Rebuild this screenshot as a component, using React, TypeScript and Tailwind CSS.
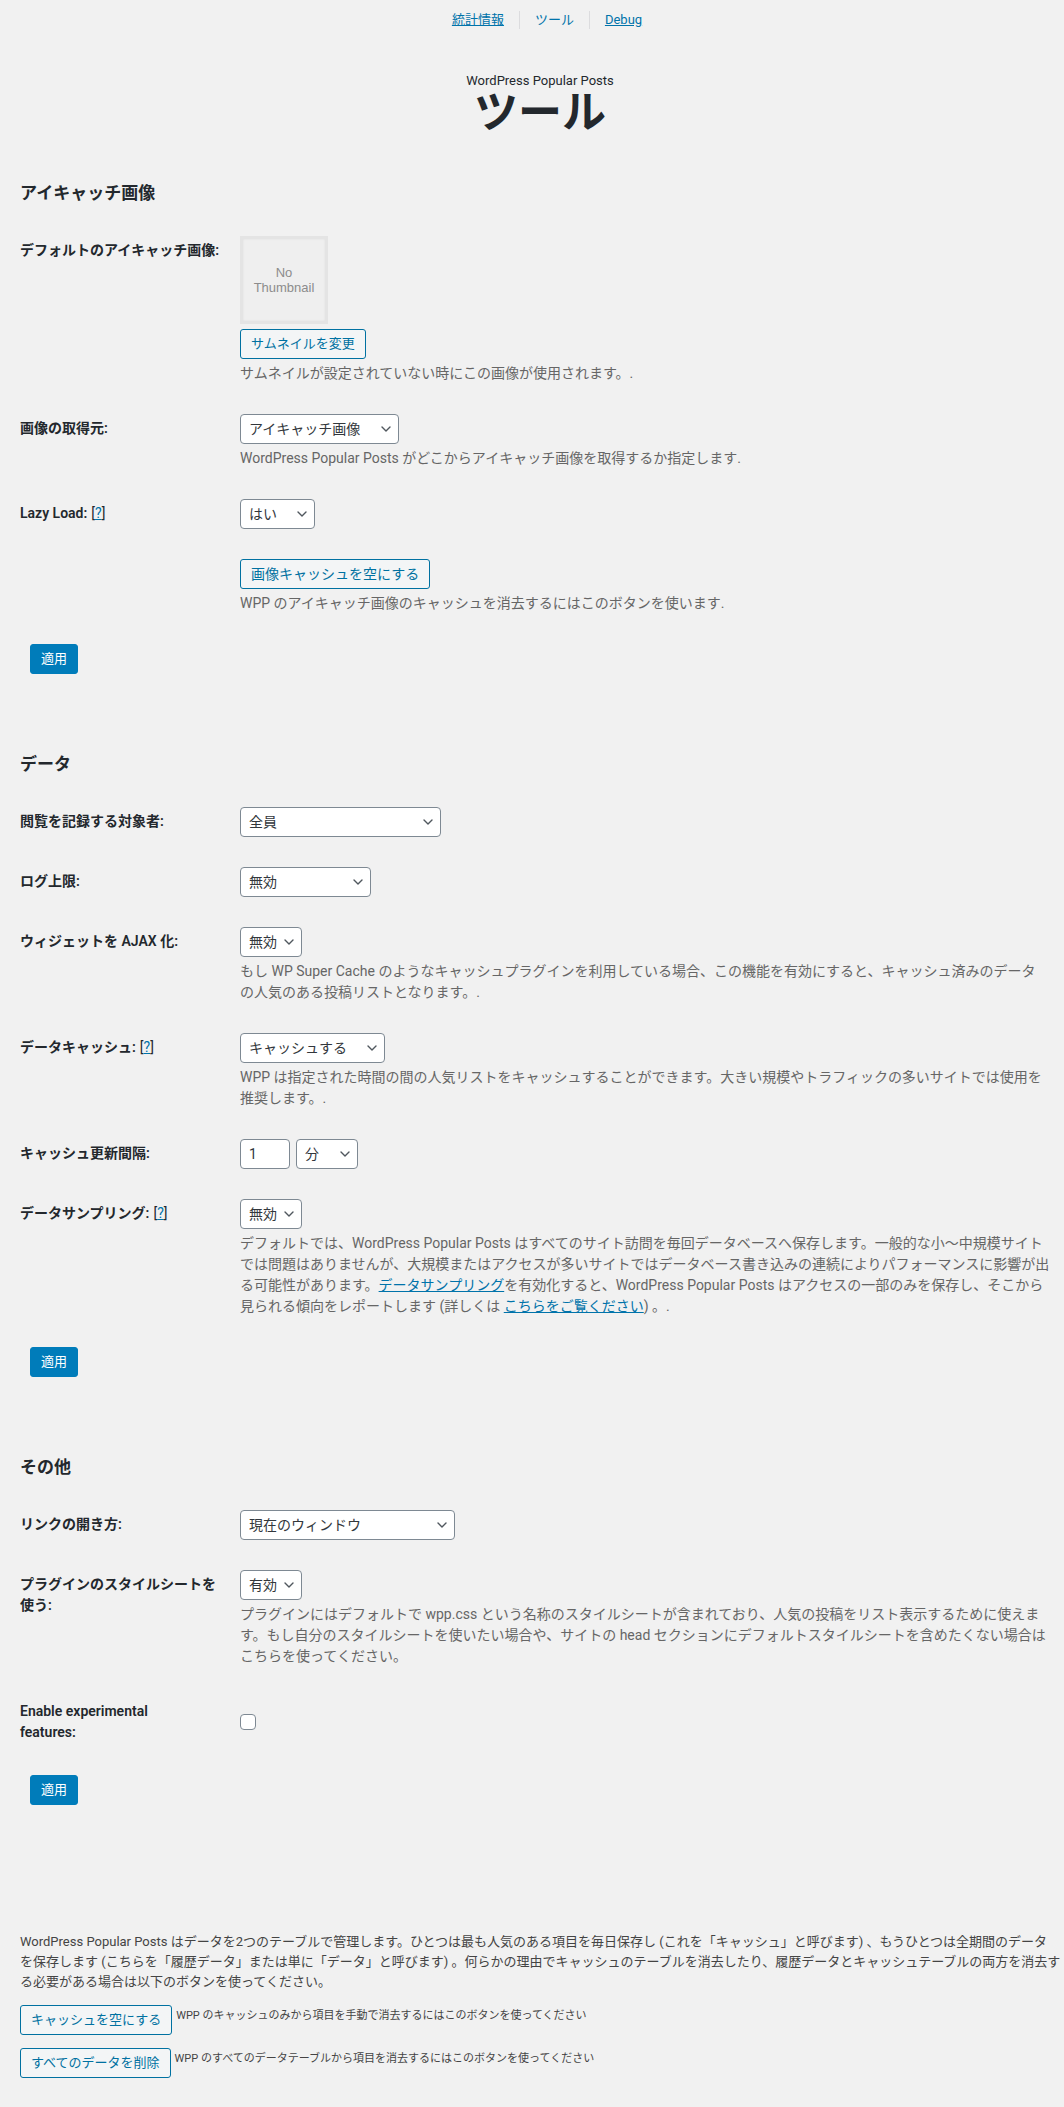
import React from 'react';

type Children = { children?: React.ReactNode };

const Chevron = () => (
    <svg
        className="pointer-events-none absolute right-[8px] top-1/2 -translate-y-1/2"
        width="10"
        height="6"
        viewBox="0 0 10 6"
        fill="none"
    >
        <path d="M1 1l4 4 4-4" stroke="#50575e" strokeWidth="1.4" strokeLinecap="round" strokeLinejoin="round" />
    </svg>
);

function Select({ value, options, className }: { value: string; options?: string[]; className: string }) {
    const opts = options ?? [value];
    return (
        <div className={`relative inline-block align-top ${className}`}>
            <select
                defaultValue={value}
                className="h-[30px] w-full appearance-none rounded-[4px] border border-[#7e8993] bg-white pl-[8px] pr-[24px] text-[14px] leading-[28px] text-[#32373c] outline-none"
            >
                {opts.map((o) => (
                    <option key={o}>{o}</option>
                ))}
            </select>
            <Chevron />
        </div>
    );
}

const Help = () => (
    <span className="ml-[4px] text-[14px] font-normal text-[#23282d]">
        [<a href="#" className="text-[#0073aa] underline">?</a>]
    </span>
);

function Row({ label, children }: { label?: React.ReactNode } & Children) {
    return (
        <div className="flex py-[15px]">
            <div className="w-[220px] shrink-0 pr-[20px] pt-[4px] text-[14px] font-semibold leading-[21px] text-[#23282d]">
                {label}
            </div>
            <div className="min-w-0 flex-1">{children}</div>
        </div>
    );
}

const Desc = ({ children }: Children) => (
    <p className="mt-[4px] text-[14px] leading-[21px] whitespace-nowrap text-[#666]">{children}</p>
);

const SecondaryButton = ({ children, className = '' }: Children & { className?: string }) => (
    <button
        type="button"
        className={`h-[30px] shrink-0 rounded-[3px] border border-[#0071a1] bg-[#f3f5f6] px-[10px] leading-[28px] text-[#0071a1] ${className}`}
    >
        {children}
    </button>
);

const ApplyButton = () => (
    <button
        type="button"
        className="ml-[10px] h-[30px] rounded-[3px] border border-[#007cba] bg-[#007cba] px-[10px] text-[13px] leading-[28px] text-white"
    >
        適用
    </button>
);

const SectionTitle = ({ children }: Children) => (
    <h2 className="text-[17px] font-semibold leading-[26px] text-[#23282d]">{children}</h2>
);

export default function App() {
    return (
        <div className="min-h-[2107px] bg-[#f1f1f1] pl-[20px] pr-[4px] pt-[10px] pb-[40px] font-['Roboto','Noto_Sans_CJK_JP',sans-serif] text-[13px] text-[#444]">
            {/* Tabs */}
            <nav className="flex items-center justify-center pl-[14px] text-[13px] leading-[20px]">
                <a href="#" className="text-[#0073aa] underline">統計情報</a>
                <span className="mx-[15px] h-[18px] w-px bg-[#dcdcde]" />
                <span className="text-[#0073aa]">ツール</span>
                <span className="mx-[15px] h-[18px] w-px bg-[#dcdcde]" />
                <a href="#" className="text-[#0073aa] underline">Debug</a>
            </nav>

            {/* Header */}
            <div className="mt-[41px] text-center text-[#23282d]">
                <div className="text-[13px] leading-[20px]">WordPress Popular Posts</div>
                <h1 className="text-[44px] font-bold leading-[44px]">ツール</h1>
            </div>

            {/* Thumbnails */}
            <section className="mt-[45px]">
                <SectionTitle>アイキャッチ画像</SectionTitle>
                <div className="mt-[15px]">
                    <Row label="デフォルトのアイキャッチ画像:">
                        <div className="flex h-[88px] w-[88px] items-center justify-center border-[3px] border-[#e4e4e4] bg-[#efefef] text-center font-['Liberation_Sans',sans-serif] text-[13px] leading-[15px] text-[#8c8c8c] shadow-[inset_0_0_2px_rgba(0,0,0,0.08)]">
                            No
                            <br />
                            Thumbnail
                        </div>
                        <SecondaryButton className="mt-[5px] text-[13px]">サムネイルを変更</SecondaryButton>
                        <Desc>サムネイルが設定されていない時にこの画像が使用されます。.</Desc>
                    </Row>
                    <Row label="画像の取得元:">
                        <Select value="アイキャッチ画像" options={['アイキャッチ画像', '最初の画像', 'カスタムフィールド']} className="w-[159px]" />
                        <Desc>WordPress Popular Posts がどこからアイキャッチ画像を取得するか指定します.</Desc>
                    </Row>
                    <Row
                        label={
                            <>
                                Lazy Load:
                                <Help />
                            </>
                        }
                    >
                        <Select value="はい" options={['はい', 'いいえ']} className="w-[75px]" />
                    </Row>
                    <Row>
                        <SecondaryButton className="text-[14px]">画像キャッシュを空にする</SecondaryButton>
                        <Desc>WPP のアイキャッチ画像のキャッシュを消去するにはこのボタンを使います.</Desc>
                    </Row>
                </div>
                <div className="mt-[15px]">
                    <ApplyButton />
                </div>
            </section>

            {/* Data */}
            <section className="mt-[77px]">
                <SectionTitle>データ</SectionTitle>
                <div className="mt-[15px]">
                    <Row label="閲覧を記録する対象者:">
                        <Select value="全員" options={['全員', '訪問者のみ', 'ログインユーザーのみ']} className="w-[201px]" />
                    </Row>
                    <Row label="ログ上限:">
                        <Select value="無効" options={['無効', '有効']} className="w-[131px]" />
                    </Row>
                    <Row label="ウィジェットを AJAX 化:">
                        <Select value="無効" options={['無効', '有効']} className="w-[62px]" />
                        <Desc>
                            もし WP Super Cache のようなキャッシュプラグインを利用している場合、この機能を有効にすると、キャッシュ済みのデータ
                            <br />
                            の人気のある投稿リストとなります。.
                        </Desc>
                    </Row>
                    <Row
                        label={
                            <>
                                データキャッシュ:
                                <Help />
                            </>
                        }
                    >
                        <Select value="キャッシュする" options={['キャッシュする', 'キャッシュしない']} className="w-[145px]" />
                        <Desc>
                            WPP は指定された時間の間の人気リストをキャッシュすることができます。大きい規模やトラフィックの多いサイトでは使用を
                            <br />
                            推奨します。.
                        </Desc>
                    </Row>
                    <Row label="キャッシュ更新間隔:">
                        <div className="flex gap-[6px]">
                            <input
                                type="text"
                                defaultValue="1"
                                className="h-[30px] w-[50px] rounded-[4px] border border-[#7e8993] bg-white px-[8px] text-[14px] text-[#32373c] outline-none"
                            />
                            <Select value="分" options={['分', '時間', '日']} className="w-[62px]" />
                        </div>
                    </Row>
                    <Row
                        label={
                            <>
                                データサンプリング:
                                <Help />
                            </>
                        }
                    >
                        <Select value="無効" options={['無効', '有効']} className="w-[62px]" />
                        <Desc>
                            デフォルトでは、WordPress Popular Posts はすべてのサイト訪問を毎回データベースへ保存します。一般的な小〜中規模サイト
                            <br />
                            では問題はありませんが、大規模またはアクセスが多いサイトではデータベース書き込みの連続によりパフォーマンスに影響が出
                            <br />
                            る可能性があります。
                            <a href="#" className="text-[#0073aa] underline">データサンプリング</a>
                            を有効化すると、WordPress Popular Posts はアクセスの一部のみを保存し、そこから
                            <br />
                            見られる傾向をレポートします (詳しくは{' '}
                            <a href="#" className="text-[#0073aa] underline">こちらをご覧ください</a>) 。.
                        </Desc>
                    </Row>
                </div>
                <div className="mt-[15px]">
                    <ApplyButton />
                </div>
            </section>

            {/* Misc */}
            <section className="mt-[77px]">
                <SectionTitle>その他</SectionTitle>
                <div className="mt-[15px]">
                    <Row label="リンクの開き方:">
                        <Select value="現在のウィンドウ" options={['現在のウィンドウ', '新しいタブ/ウィンドウ']} className="w-[215px]" />
                    </Row>
                    <Row
                        label={
                            <>
                                プラグインのスタイルシートを
                                <br />
                                使う:
                            </>
                        }
                    >
                        <Select value="有効" options={['有効', '無効']} className="w-[62px]" />
                        <Desc>
                            プラグインにはデフォルトで wpp.css という名称のスタイルシートが含まれており、人気の投稿をリスト表示するために使えま
                            <br />
                            す。もし自分のスタイルシートを使いたい場合や、サイトの head セクションにデフォルトスタイルシートを含めたくない場合は
                            <br />
                            こちらを使ってください。
                        </Desc>
                    </Row>
                    <Row
                        label={
                            <>
                                Enable experimental
                                <br />
                                features:
                            </>
                        }
                    >
                        <input
                            type="checkbox"
                            className="mt-[17px] block h-[16px] w-[16px] appearance-none rounded-[4px] border border-[#7e8993] bg-white"
                        />
                    </Row>
                </div>
                <div className="mt-[17px]">
                    <ApplyButton />
                </div>
            </section>

            {/* Cache / data removal */}
            <section className="mt-[127px]">
                <p className="text-[13px] leading-[20px] whitespace-nowrap text-[#444]">
                    WordPress Popular Posts はデータを2つのテーブルで管理します。ひとつは最も人気のある項目を毎日保存し (これを「キャッシュ」と呼びます) 、もうひとつは全期間のデータ
                    <br />
                    を保存します (こちらを「履歴データ」または単に「データ」と呼びます) 。何らかの理由でキャッシュのテーブルを消去したり、履歴データとキャッシュテーブルの両方を消去す
                    <br />
                    る必要がある場合は以下のボタンを使ってください。
                </p>
                <div className="mt-[13px] flex items-start">
                    <SecondaryButton className="text-[13px]">キャッシュを空にする</SecondaryButton>
                    <span className="ml-[4px] mt-[3px] text-[11px] leading-[16px] text-[#444]">
                        WPP のキャッシュのみから項目を手動で消去するにはこのボタンを使ってください
                    </span>
                </div>
                <div className="mt-[13px] flex items-start">
                    <SecondaryButton className="text-[13px]">すべてのデータを削除</SecondaryButton>
                    <span className="ml-[4px] mt-[3px] text-[11px] leading-[16px] text-[#444]">
                        WPP のすべてのデータテーブルから項目を消去するにはこのボタンを使ってください
                    </span>
                </div>
            </section>
        </div>
    );
}
